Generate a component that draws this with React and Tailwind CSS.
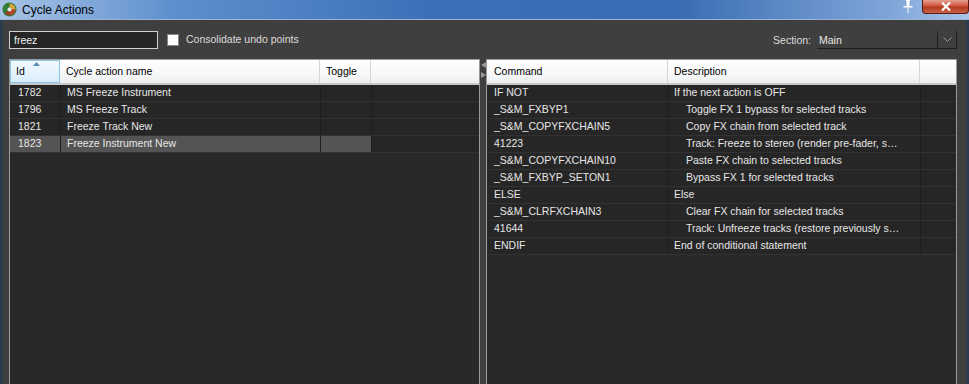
import { useState } from "react"

const cycleRows = [
  { id: "1782", name: "MS Freeze Instrument" },
  { id: "1796", name: "MS Freeze Track" },
  { id: "1821", name: "Freeze Track New" },
  { id: "1823", name: "Freeze Instrument New" },
]

const commandRows = [
  { cmd: "IF NOT", desc: "If the next action is OFF", indent: false },
  { cmd: "_S&M_FXBYP1", desc: "Toggle FX 1 bypass for selected tracks", indent: true },
  { cmd: "_S&M_COPYFXCHAIN5", desc: "Copy FX chain from selected track", indent: true },
  { cmd: "41223", desc: "Track: Freeze to stereo (render pre-fader, s…", indent: true },
  { cmd: "_S&M_COPYFXCHAIN10", desc: "Paste FX chain to selected tracks", indent: true },
  { cmd: "_S&M_FXBYP_SETON1", desc: "Bypass FX 1 for selected tracks", indent: true },
  { cmd: "ELSE", desc: "Else", indent: false },
  { cmd: "_S&M_CLRFXCHAIN3", desc: "Clear FX chain for selected tracks", indent: true },
  { cmd: "41644", desc: "Track: Unfreeze tracks (restore previously s…", indent: true },
  { cmd: "ENDIF", desc: "End of conditional statement", indent: false },
]

const ReaperLogo = () => (
  <svg width="15" height="15" viewBox="0 0 16 16">
    <circle cx="8" cy="8" r="7.5" fill="#2f7d3a" />
    <path d="M8 1.5 A6.5 6.5 0 0 1 14.5 8 L8 8 Z" fill="#d9a23a" />
    <path d="M14.5 8 A6.5 6.5 0 0 1 8 14.5 L8 8 Z" fill="#b6452c" />
    <path d="M8 14.5 A6.5 6.5 0 0 1 3 12 L8 8 Z" fill="#9b3a26" />
    <circle cx="8" cy="8" r="2.2" fill="#e8e8e8" />
  </svg>
)

const HeaderCell = ({ children, className = "" }) => (
  <div className={`h-full flex items-center pl-[6px] border-r border-[#d5d5d5] ${className}`}>{children}</div>
)

const App = () => {
  const [search, setSearch] = useState("freez")
  const [consolidate, setConsolidate] = useState(false)

  return (
    <div
      className="w-[969px] h-[384px] flex flex-col overflow-hidden bg-[#3f3f3f] text-[10.5px]"
      style={{ fontFamily: '"Liberation Sans", Arial, sans-serif' }}
    >
      {/* title bar */}
      <div className="h-[20px] flex items-start bg-[linear-gradient(90deg,#a8c3e6_0%,#5d8fce_18%,#3c6fb6_45%,#3a6cb3_70%,#7fa6d9_92%,#a9c5ea_100%)] border-b border-[#9bb4d4]">
        <div className="pl-[2px] pt-[2px]">
          <ReaperLogo />
        </div>
        <span className="ml-[5px] mt-[1px] text-[12px] text-black">Cycle Actions</span>
        <div className="ml-auto flex items-start">
          <svg width="10" height="13" viewBox="0 0 10 13" className="mr-[9px]">
            <path d="M3 0 H7 V1 H6.5 V6 H9.5 V7.5 H5.5 V13 H4.5 V7.5 H0.5 V6 H3.5 V1 H3 Z" fill="#fff" />
          </svg>
          <div className="w-[47px] h-[14px] rounded-b-[4px] border border-t-0 border-[#5a1a12] bg-[linear-gradient(180deg,#e8a08f_0%,#d0553c_45%,#b23a22_55%,#c9634a_100%)] flex items-center justify-center">
            <svg width="10" height="9" viewBox="0 0 10 9">
              <path d="M1 0.5 L9 8.5 M9 0.5 L1 8.5" stroke="#fff" strokeWidth="2.2" />
            </svg>
          </div>
        </div>
      </div>

      {/* body */}
      <div className="flex-1 flex flex-col border-l-[3px] border-r-[3px] border-[#2c3b4e] pl-[6px] pr-[9px] pt-[11px]">
        {/* toolbar */}
        <div className="h-[18px] flex items-center">
          <input
            value={search}
            onChange={(e) => setSearch(e.target.value)}
            className="w-[149px] h-[18px] bg-[#262626] border border-[#d0d0d0] text-[#f0f0f0] px-[4px] text-[10.5px] outline-none"
          />
          <button
            onClick={() => setConsolidate(!consolidate)}
            className="ml-[9px] w-[12px] h-[12px] bg-white border border-[#8a8a8a]"
          />
          <span className="ml-[7px] text-[#dcdcdc]">Consolidate undo points</span>
          <span className="ml-auto mt-[2px] text-[#dcdcdc]">Section:</span>
          <div className="ml-[6px] w-[140px] h-[18px] border-b border-r border-[#1e1e1e] flex items-center">
            <span className="pl-[2px] pt-[2px] text-[#e8e8e8] flex-1">Main</span>
            <div className="w-[19px] h-full border-l border-[#1e1e1e] flex items-center justify-center">
              <svg width="9" height="5" viewBox="0 0 9 5">
                <path d="M0.5 0.5 L4.5 4.5 L8.5 0.5" stroke="#9a9a9a" fill="none" />
              </svg>
            </div>
          </div>
        </div>

        {/* lists */}
        <div className="flex-1 flex mt-[10px]">
          {/* left list */}
          <div className="w-[471px] flex flex-col border border-[#9a9a9a] border-b-0 bg-[#292929]">
            <div className="h-[25px] flex bg-[linear-gradient(180deg,#ffffff_0%,#f7f8f9_60%,#eceef0_100%)] border-b-2 border-[#c8c8c8] text-black">
              <div className="relative w-[50px] h-full flex items-center pl-[5px] bg-[linear-gradient(180deg,#f2f9fe_0%,#d9eefb_100%)] border border-[#8cc4e8]">
                Id
                <svg width="7" height="4" viewBox="0 0 7 4" className="absolute left-[22px] top-[1px]">
                  <path d="M0 4 L3.5 0 L7 4 Z" fill="#5d8ab3" />
                </svg>
              </div>
              <HeaderCell className="w-[260px]">Cycle action name</HeaderCell>
              <HeaderCell className="w-[51px]">Toggle</HeaderCell>
              <div className="flex-1" />
            </div>
            <div className="flex flex-col">
              {cycleRows.map((row, index) => {
                const selected = index === cycleRows.length - 1
                return (
                  <div key={row.id} className="h-[17px] flex border-b border-[#323232] text-[#e6e6e6]">
                    <div className={`w-[50px] pl-[8px] flex items-center ${selected ? "bg-[#545454]" : "bg-[#262626]"}`}>{row.id}</div>
                    <div className={`w-[260px] pl-[6px] flex items-center border-l border-[#1e1e1e] ${selected ? "bg-[#545454]" : "bg-[#262626]"}`}>{row.name}</div>
                    <div className={`w-[51px] border-l border-[#1e1e1e] ${selected ? "bg-[#545454]" : "bg-[#262626]"}`} />
                    <div className="flex-1 border-l border-[#1e1e1e] bg-[#262626]" />
                  </div>
                )
              })}
            </div>
          </div>

          {/* splitter */}
          <div className="w-[6px] flex flex-col items-center pt-[3px] gap-[4px]">
            <svg width="5" height="6" viewBox="0 0 5 6">
              <path d="M5 0 L0 3 L5 6 Z" fill="#9c9c9c" />
            </svg>
            <svg width="5" height="6" viewBox="0 0 5 6">
              <path d="M0 0 L5 3 L0 6 Z" fill="#9c9c9c" />
            </svg>
          </div>

          {/* right list */}
          <div className="w-[471px] flex flex-col border border-[#9a9a9a] border-b-0 bg-[#292929]">
            <div className="h-[25px] flex bg-[linear-gradient(180deg,#ffffff_0%,#f7f8f9_60%,#eceef0_100%)] border-b-2 border-[#c8c8c8] text-black">
              <HeaderCell className="w-[181px] pl-[7px]">Command</HeaderCell>
              <HeaderCell className="w-[252px]">Description</HeaderCell>
              <div className="flex-1" />
            </div>
            <div className="flex flex-col">
              {commandRows.map((row, index) => (
                <div key={index} className="h-[17px] flex bg-[#262626] border-b border-[#323232] text-[#e6e6e6]">
                  <div className="w-[181px] pl-[7px] flex items-center whitespace-nowrap">{row.cmd}</div>
                  <div className={`w-[252px] flex items-center border-l border-[#1e1e1e] whitespace-nowrap ${row.indent ? "pl-[17px]" : "pl-[5px]"}`}>{row.desc}</div>
                  <div className="flex-1 border-l border-[#1e1e1e]" />
                </div>
              ))}
            </div>
          </div>
        </div>
      </div>
    </div>
  )
}

export default App
